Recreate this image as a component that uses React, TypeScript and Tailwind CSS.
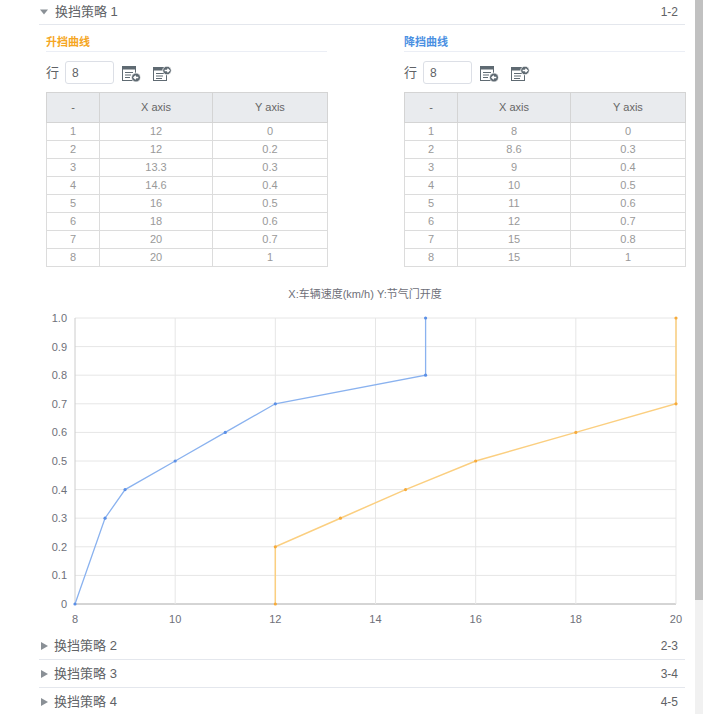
import React from "react";

const FONT = '"Liberation Sans", "Noto Sans CJK SC", Arial, sans-serif';

const up: [number, number][] = [
  [12, 0], [12, 0.2], [13.3, 0.3], [14.6, 0.4], [16, 0.5], [18, 0.6], [20, 0.7], [20, 1],
];
const down: [number, number][] = [
  [8, 0], [8.6, 0.3], [9, 0.4], [10, 0.5], [11, 0.6], [12, 0.7], [15, 0.8], [15, 1],
];

function ImportIcon() {
  return (
    <svg width="19" height="16" viewBox="0 0 19 16">
      <rect x="0.5" y="0.5" width="13" height="14" fill="none" stroke="#5f6a72" />
      <rect x="0.5" y="0.5" width="13" height="3" fill="#5f6a72" />
      <line x1="3" y1="6.5" x2="11" y2="6.5" stroke="#5f6a72" />
      <line x1="3" y1="9" x2="9" y2="9" stroke="#5f6a72" />
      <line x1="3" y1="11.5" x2="8" y2="11.5" stroke="#5f6a72" />
      <circle cx="14" cy="11.5" r="4.5" fill="#5f6a72" stroke="#fff" strokeWidth="0.8" />
      <path d="M16.3 11.5 H12 M13.8 9.7 L12 11.5 L13.8 13.3" fill="none" stroke="#fff" strokeWidth="1.3" />
    </svg>
  );
}

function ExportIcon() {
  return (
    <svg width="19" height="16" viewBox="0 0 19 16">
      <rect x="0.5" y="1.5" width="13" height="13" fill="none" stroke="#5f6a72" />
      <rect x="0.5" y="1.5" width="13" height="3" fill="#5f6a72" />
      <line x1="3" y1="7.5" x2="11" y2="7.5" stroke="#5f6a72" />
      <line x1="3" y1="10" x2="10" y2="10" stroke="#5f6a72" />
      <line x1="3" y1="12.5" x2="9" y2="12.5" stroke="#5f6a72" />
      <circle cx="14" cy="4.5" r="4.3" fill="#5f6a72" stroke="#fff" strokeWidth="0.8" />
      <path d="M11.6 4.5 H16.2 M14.4 2.7 L16.2 4.5 L14.4 6.3" fill="none" stroke="#fff" strokeWidth="1.3" />
    </svg>
  );
}

function Section({ title, color, data }: { title: string; color: string; data: [number, number][] }) {
  return (
    <div className="w-[281px]">
      <div className="h-[27px] border-b border-[#ebeef5] flex items-end pb-[3px]">
        <span className={`text-[11px] font-bold leading-none ${color}`}>{title}</span>
      </div>
      <div className="flex items-center mt-[9px] h-[23px]">
        <span className="text-[13px] text-[#606266] w-[19px]">行</span>
        <div className="w-[49px] h-[23px] border border-[#dcdfe6] rounded-[3px] flex items-center pl-[6px] text-[12px] text-[#606266]">
          8
        </div>
        <div className="ml-[8px] mt-[2px]">
          <ImportIcon />
        </div>
        <div className="ml-[12px] mt-[2px]">
          <ExportIcon />
        </div>
      </div>
      <table className="mt-[8px] w-[281px] border-collapse border border-[#d4d4d4] table-fixed">
        <colgroup>
          <col className="w-[53px]" />
          <col className="w-[113px]" />
          <col className="w-[115px]" />
        </colgroup>
        <thead>
          <tr className="h-[30px] bg-[#e9ebee]">
            <th className="border border-[#d4d4d4] text-[11px] font-normal text-[#666]">-</th>
            <th className="border border-[#d4d4d4] text-[11px] font-normal text-[#666]">X axis</th>
            <th className="border border-[#d4d4d4] text-[11px] font-normal text-[#666]">Y axis</th>
          </tr>
        </thead>
        <tbody>
          {data.map((d, i) => (
            <tr key={i} className="h-[18px]">
              <td className="border border-[#dcdcdc] text-center text-[11px] leading-none text-[#999]">{i + 1}</td>
              <td className="border border-[#dcdcdc] text-center text-[11px] leading-none text-[#999]">{d[0]}</td>
              <td className="border border-[#dcdcdc] text-center text-[11px] leading-none text-[#999]">{d[1]}</td>
            </tr>
          ))}
        </tbody>
      </table>
    </div>
  );
}

const px = (x: number) => 75 + (x - 8) * 50.083;
const py = (y: number) => 325 - y * 286;

function Chart() {
  const yTicks = [0, 0.1, 0.2, 0.3, 0.4, 0.5, 0.6, 0.7, 0.8, 0.9, 1.0];
  const xTicks = [8, 10, 12, 14, 16, 18, 20];
  const line = (d: [number, number][]) => d.map((p) => `${px(p[0]).toFixed(1)},${py(p[1]).toFixed(1)}`).join(" ");
  return (
    <div className="h-[353px] -ml-[39px]">
      <svg width="695" height="353" viewBox="0 0 695 353" style={{ fontFamily: FONT }}>
        <text x="365" y="19" textAnchor="middle" fontSize="11" fill="#6e7079">
          X:车辆速度(km/h) Y:节气门开度
        </text>
        {yTicks.map((t) => (
          <g key={t}>
            <line x1="75" x2="676" y1={py(t)} y2={py(t)} stroke={t === 0 ? "#aaaaaa" : "#e6e6e6"} strokeWidth="1" />
            <text x="67" y={py(t) + 4} textAnchor="end" fontSize="11" fill="#6e7079">
              {t === 0 ? "0" : t.toFixed(1)}
            </text>
          </g>
        ))}
        {xTicks.map((t) => (
          <g key={t}>
            {t !== 8 && <line x1={px(t)} x2={px(t)} y1={py(1)} y2={py(0)} stroke="#e6e6e6" strokeWidth="1" />}
            <text x={px(t)} y="344" textAnchor="middle" fontSize="11" fill="#6e7079">
              {t}
            </text>
          </g>
        ))}
        <line x1="75" x2="75" y1={py(1)} y2={py(0)} stroke="#cccccc" strokeWidth="1" />
        <polyline points={line(up)} fill="none" stroke="#fbcf80" strokeWidth="1.5" />
        <polyline points={line(down)} fill="none" stroke="#8ab2ef" strokeWidth="1.3" />
        {up.map((p, i) => (
          <circle key={`u${i}`} cx={px(p[0])} cy={py(p[1])} r="1.6" fill="#f6aa3a" />
        ))}
        {down.map((p, i) => (
          <circle key={`d${i}`} cx={px(p[0])} cy={py(p[1])} r="1.6" fill="#5b8fe6" />
        ))}
      </svg>
    </div>
  );
}

function Collapsed({ n, range }: { n: number; range: string }) {
  return (
    <div className="h-[28px] shrink-0 border-b border-[#e4e7ed] flex items-center text-[#606266]">
      <svg width="9" height="10" viewBox="0 0 9 10" className="ml-[1px]">
        <path d="M1 1 L8 5 L1 9 Z" fill="#8a9096" />
      </svg>
      <span className="ml-[5px] text-[13px]">换挡策略 {n}</span>
      <span className="ml-auto text-[12px] pr-[7px]">{range}</span>
    </div>
  );
}

export default function App() {
  return (
    <div className="h-[714px] w-[703px] flex bg-white overflow-hidden" style={{ fontFamily: FONT }}>
      <div className="w-[695px] h-[714px] overflow-hidden pl-[39px] pr-[10px] flex flex-col">
        <div className="h-[25px] shrink-0 border-b border-[#e4e7ed] flex items-center text-[#606266]">
          <svg width="10" height="8" viewBox="0 0 10 8">
            <path d="M1 1.5 L9 1.5 L5 6.5 Z" fill="#8a9096" />
          </svg>
          <span className="ml-[6px] text-[13px]">换挡策略 1</span>
          <span className="ml-auto text-[12px] pr-[7px]">1-2</span>
        </div>
        <div className="flex pl-[7px] justify-between shrink-0">
          <Section title="升挡曲线" color="text-[#f5a623]" data={up} />
          <Section title="降挡曲线" color="text-[#4a90e2]" data={down} />
        </div>
        <div className="mt-[12px] shrink-0">
          <Chart />
        </div>
        <Collapsed n={2} range="2-3" />
        <Collapsed n={3} range="3-4" />
        <Collapsed n={4} range="4-5" />
      </div>
      <div className="w-[8px] h-[714px] bg-[#f1f1f1] flex flex-col">
        <div className="h-[600px] w-[8px] bg-[#c1c1c1]" />
      </div>
    </div>
  );
}
